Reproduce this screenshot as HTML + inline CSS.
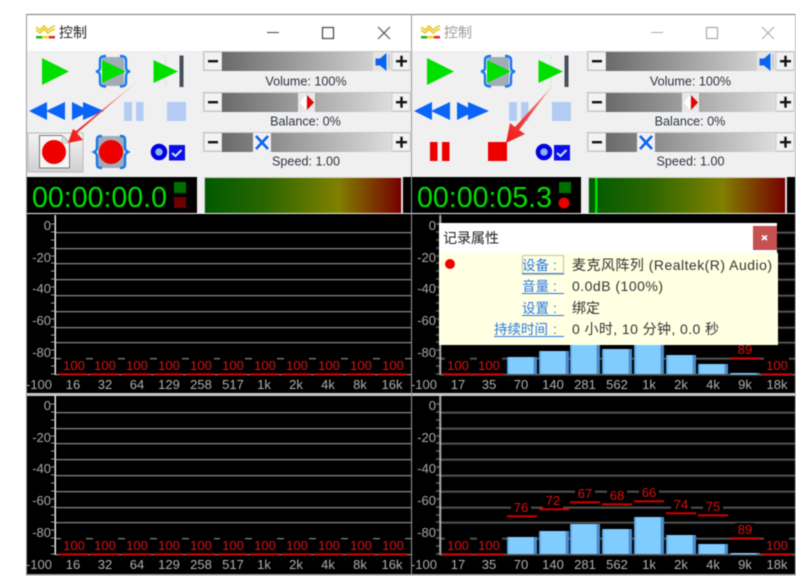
<!DOCTYPE html>
<html><head><meta charset="utf-8">
<style>
html,body{margin:0;padding:0;background:#fff;width:796px;height:576px;overflow:hidden}
svg{display:block;filter:blur(.45px)}
text{font-family:"Liberation Sans","Noto Sans CJK SC",sans-serif}
.lb{font-size:12.600px;fill:#2c3440;text-anchor:middle}
.ax{font-size:13px;fill:#a8a8a8;text-anchor:end}
.fr{font-size:13px;fill:#b0b0b0;text-anchor:middle}
.rd{font-size:13px;fill:#d81010;text-anchor:middle}
.tm{font-size:29px;fill:#00e000}
.lk{font-size:13.500px;fill:#2a78e4}
.vl{font-size:14px;fill:#333}
</style></head><body>
<svg width="796" height="576" viewBox="0 0 796 576" xmlns="http://www.w3.org/2000/svg">
<defs>
<linearGradient id="trk"><stop offset="0" stop-color="#6a6a6a"/><stop offset="1" stop-color="#dedede"/></linearGradient>
<linearGradient id="mtr"><stop offset="0" stop-color="#005a00"/><stop offset=".3" stop-color="#2a6600"/><stop offset=".68" stop-color="#808000"/><stop offset="1" stop-color="#780000"/></linearGradient>
<linearGradient id="btn" x1="0" y1="0" x2="0" y2="1"><stop offset="0" stop-color="#f4f4f4"/><stop offset="1" stop-color="#d0d0d0"/></linearGradient>
<linearGradient id="bar"><stop offset="0" stop-color="#4a8ac8"/><stop offset=".08" stop-color="#80ccff"/><stop offset=".88" stop-color="#80ccff"/><stop offset=".9" stop-color="#4a8ac8"/><stop offset="1" stop-color="#4a8ac8"/></linearGradient>
<linearGradient id="arL" x1="139" y1="80" x2="68" y2="143" gradientUnits="userSpaceOnUse"><stop offset="0" stop-color="#f8c0c0"/><stop offset=".5" stop-color="#f04848"/><stop offset="1" stop-color="#f01818"/></linearGradient>
<linearGradient id="arR" x1="553" y1="85" x2="506" y2="143" gradientUnits="userSpaceOnUse"><stop offset="0" stop-color="#f8c0c0"/><stop offset=".5" stop-color="#f04848"/><stop offset="1" stop-color="#f01818"/></linearGradient>

<g id="grid" fill="#808080">
<rect x="0" y="-142" width="356" height="1.300"/><rect x="0" y="-126" width="356" height="1.300"/><rect x="0" y="-111" width="356" height="1.300"/><rect x="0" y="-95" width="356" height="1.300"/><rect x="0" y="-79" width="356" height="1.300"/><rect x="0" y="-63" width="356" height="1.300"/><rect x="0" y="-47" width="356" height="1.300"/><rect x="0" y="-32" width="356" height="1.300"/><rect x="0" y="-16" width="356" height="1.300"/><rect x="0" y="0" width="356" height="1.300"/>
<rect x="-1.500" y="-159" width="1.500" height="160" fill="#e8e8e8"/>
<path d="M-5 -150h4M-5 -142h4M-5 -134h4M-5 -126h4M-5 -118h4M-5 -111h4M-5 -103h4M-5 -95h4M-5 -87h4M-5 -79h4M-5 -71h4M-5 -63h4M-5 -55h4M-5 -47h4M-5 -39h4M-5 -32h4M-5 -24h4M-5 -16h4M-5 -8h4M-5 0h4" stroke="#999" stroke-width="1" fill="none"/>
</g>

<g id="sld">
<rect x="0" y="0" width="207" height="20" fill="#c8c8c8"/>
<rect x="1" y="1" width="18" height="18" fill="#f2f2f2" stroke="#bbb" stroke-width=".6"/>
<rect x="5" y="9" width="10" height="2.400" fill="#111"/>
<rect x="19" y="1" width="170" height="19" fill="url(#trk)"/>
<rect x="189" y="1" width="18" height="18" fill="#f2f2f2" stroke="#bbb" stroke-width=".6"/>
<rect x="193" y="9" width="11" height="2.400" fill="#111"/><rect x="197.300" y="4.700" width="2.400" height="11" fill="#111"/>
</g>

<g id="ctl">
<path d="M42 58L69 71.500L42 85Z" fill="#00e000"/>
<rect x="102" y="57" width="22" height="29" fill="#a2acb8"/>
<path d="M106 56c-4 0-6 1-6 4v7c0 3-1 4-4 4.500c3 .5 4 2 4 5v6c0 3 2 4 6 4M120 56c4 0 6 1 6 4v7c0 3 1 4 4 4.500c-3 .5-4 2-4 5v6c0 3-2 4-6 4" fill="none" stroke="#1478f0" stroke-width="2.400"/>
<path d="M102 60L126 71.500L102 83Z" fill="#00e000"/>
<rect x="165" y="55" width="1.200" height="32" fill="#d4f0d4"/>
<path d="M153.500 60L178 71.500L153.500 83Z" fill="#00e000"/>
<rect x="179.500" y="55.500" width="4" height="31.500" fill="#46505a"/>
<path d="M29 111L47 102V120ZM46 111L65 102V120Z" fill="#0a64f8"/>
<path d="M72 102L90 111L72 120ZM83 102L104 111L83 120Z" fill="#0a64f8"/>
<rect x="124" y="102" width="8" height="19" fill="#b4ccf4"/><rect x="136" y="102" width="7.500" height="19" fill="#b4ccf4"/>
<rect x="167" y="102" width="19" height="19" fill="#b4ccf4"/>
<circle cx="159" cy="152" r="6" fill="#8cb0f0" stroke="#0000e0" stroke-width="4.500"/>
<rect x="169" y="145" width="16" height="15.500" fill="#0a10e8"/>
<path d="M172 153l3.500 3l6-6" fill="none" stroke="#d0e0ff" stroke-width="2"/>
</g>

<g id="thV"><rect x="0" y="0" width="18" height="19" fill="#e4e4e4"/><path d="M2.500 6.500h4.500l6.500-5.500v18l-6.500-5.500H2.500Z" fill="#0a64f0"/><rect x="15.500" y="2" width="1" height="15" fill="#b8b8b8"/></g>
<g id="thB"><rect x="0" y="0" width="17" height="19" fill="#e8e8e8"/><path d="M8 2L2 9.500L8 17Z" fill="#fff"/><path d="M9 2L16 9.500L9 17Z" fill="#e80000"/></g>
<g id="thS"><rect x="0" y="0" width="18" height="19" fill="#f0f0f0"/><path d="M3 3L15 16M15 3L3 16" stroke="#0a64f0" stroke-width="2.600"/></g>

<g id="ttl"><path d="M0 3l4 3l4-4l4 4l4-3l3-1M0 6l4 3l4-4l4 4l4-3l3-1" fill="none" stroke="#e8c820" stroke-width="1.600"/><rect x="0" y="12" width="6" height="2.500" fill="#20b030"/><rect x="6" y="12" width="7" height="2.500" fill="#f0d820"/><rect x="13" y="12" width="6" height="2.500" fill="#e82020"/></g>

<g id="mk"><rect x="0" y="-18" width="25" height="17.500" fill="#000"/></g>
<g id="mk2"><rect x="0" y="-15" width="20" height="14.500" fill="#000"/></g>
<g id="l100"><rect x="0" y="-.7" width="29" height="2" fill="#d00000"/></g>
<g id="l100w"><rect x="0" y="-.7" width="30" height="2" fill="#d00000"/></g>
</defs>

<rect width="796" height="576" fill="#fff"/>

<!-- LEFT WINDOW -->
<rect x="26" y="51" width="385" height="163" fill="#f0f0f0"/>
<rect x="26" y="214" width="385" height="361" fill="#c8c8c8"/>
<use href="#ttl" x="36" y="24"/>
<text x="59" y="37.500" font-size="14" fill="#222">控制</text>
<rect x="267" y="32" width="12" height="1" fill="#444"/>
<rect x="322.500" y="27.500" width="11" height="11" fill="none" stroke="#444" stroke-width="1.200"/>
<path d="M378 27L390 39M390 27L378 39" stroke="#444" stroke-width="1"/>

<use href="#ctl"/>
<rect x="28" y="133" width="55" height="39" fill="url(#btn)" stroke="#bbb" stroke-width="1"/>
<path d="M39.500 135.500H62L69.500 143V168H39.500Z" fill="#f6f6f6" stroke="#777" stroke-width="1"/>
<path d="M62 135.500V143H69.500" fill="#ddd" stroke="#bbb" stroke-width=".8"/>
<circle cx="54" cy="152" r="12" fill="#ee0000"/>
<rect x="98" y="136" width="26" height="32" fill="#a2acb8"/>
<path d="M102 136c-4 0-5 1-5 4v7c0 3-1 4-3 5c2 1 3 2 3 5v7c0 3 1 4 5 4M120 136c4 0 5 1 5 4v7c0 3 1 4 3 5c-2 1-3 2-3 5v7c0 3-1 4-5 4" fill="none" stroke="#1478f0" stroke-width="2.400"/>
<circle cx="111" cy="152" r="12" fill="#ee0000"/>
<path d="M139 80L77 133L83 140L68 143L73 129L76 131Z" fill="url(#arL)"/>

<use href="#sld" x="203" y="51"/><use href="#sld" x="203" y="92"/><use href="#sld" x="203" y="132"/>
<use href="#thV" x="373" y="52"/><use href="#thB" x="298" y="93"/><use href="#thS" x="253" y="133"/>
<text class="lb" x="306" y="85.500">Volume: 100%</text>
<text class="lb" x="305.500" y="125.500">Balance: 0%</text>
<text class="lb" x="306" y="165.500">Speed: 1.00</text>

<rect x="27" y="177" width="170" height="36" fill="#000"/>
<text class="tm" x="32" y="207" textLength="135" lengthAdjust="spacingAndGlyphs">00:00:00.0</text>
<rect x="174" y="182" width="12" height="11" fill="#006f00"/>
<rect x="174" y="197" width="12" height="11" fill="#6f0000"/>
<rect x="204" y="177" width="198" height="36" fill="#d0d0d0"/>
<rect x="205" y="178" width="196" height="35" fill="url(#mtr)"/>
<rect x="403" y="177" width="8" height="36" fill="#000"/>

<!-- left panels -->
<rect x="27" y="214" width="384" height="179" fill="#000"/>
<rect x="27" y="396" width="384" height="178" fill="#000"/>
<use href="#grid" x="56" y="374"/>
<use href="#grid" x="56" y="554"/>
<use href="#mk" x="61" y="374"/><use href="#mk" x="93" y="374"/><use href="#mk" x="125" y="374"/><use href="#mk" x="157" y="374"/><use href="#mk" x="189" y="374"/><use href="#mk" x="220" y="374"/><use href="#mk" x="252" y="374"/><use href="#mk" x="284" y="374"/><use href="#mk" x="316" y="374"/><use href="#mk" x="348" y="374"/><use href="#mk" x="380" y="374"/>
<use href="#mk" x="61" y="554"/><use href="#mk" x="93" y="554"/><use href="#mk" x="125" y="554"/><use href="#mk" x="157" y="554"/><use href="#mk" x="189" y="554"/><use href="#mk" x="220" y="554"/><use href="#mk" x="252" y="554"/><use href="#mk" x="284" y="554"/><use href="#mk" x="316" y="554"/><use href="#mk" x="348" y="554"/><use href="#mk" x="380" y="554"/>
<g>
<text class="ax" x="51" y="230">0</text><text class="ax" x="51" y="262">-20</text><text class="ax" x="51" y="293">-40</text><text class="ax" x="51" y="325">-60</text><text class="ax" x="51" y="357">-80</text><text class="ax" x="52" y="389">-100</text>
<text class="ax" x="51" y="410">0</text><text class="ax" x="51" y="442">-20</text><text class="ax" x="51" y="473">-40</text><text class="ax" x="51" y="505">-60</text><text class="ax" x="51" y="537">-80</text><text class="ax" x="52" y="569">-100</text>
</g>
<g>
<text class="fr" x="73" y="389">16</text><text class="fr" x="105" y="389">32</text><text class="fr" x="137" y="389">64</text><text class="fr" x="169" y="389">129</text><text class="fr" x="201" y="389">258</text><text class="fr" x="233" y="389">517</text><text class="fr" x="264" y="389">1k</text><text class="fr" x="296" y="389">2k</text><text class="fr" x="328" y="389">4k</text><text class="fr" x="360" y="389">8k</text><text class="fr" x="392" y="389">16k</text>
<text class="fr" x="73" y="569">16</text><text class="fr" x="105" y="569">32</text><text class="fr" x="137" y="569">64</text><text class="fr" x="169" y="569">129</text><text class="fr" x="201" y="569">258</text><text class="fr" x="233" y="569">517</text><text class="fr" x="264" y="569">1k</text><text class="fr" x="296" y="569">2k</text><text class="fr" x="328" y="569">4k</text><text class="fr" x="360" y="569">8k</text><text class="fr" x="392" y="569">16k</text>
</g>
<g>
<use href="#l100" x="59" y="374"/><use href="#l100" x="90" y="374"/><use href="#l100" x="122" y="374"/><use href="#l100" x="154" y="374"/><use href="#l100" x="186" y="374"/><use href="#l100" x="218" y="374"/><use href="#l100" x="250" y="374"/><use href="#l100" x="282" y="374"/><use href="#l100" x="314" y="374"/><use href="#l100" x="346" y="374"/><use href="#l100" x="378" y="374"/>
<use href="#l100" x="59" y="554"/><use href="#l100" x="90" y="554"/><use href="#l100" x="122" y="554"/><use href="#l100" x="154" y="554"/><use href="#l100" x="186" y="554"/><use href="#l100" x="218" y="554"/><use href="#l100" x="250" y="554"/><use href="#l100" x="282" y="554"/><use href="#l100" x="314" y="554"/><use href="#l100" x="346" y="554"/><use href="#l100" x="378" y="554"/>
<text class="rd" x="74" y="370">100</text><text class="rd" x="105" y="370">100</text><text class="rd" x="137" y="370">100</text><text class="rd" x="169" y="370">100</text><text class="rd" x="201" y="370">100</text><text class="rd" x="233" y="370">100</text><text class="rd" x="265" y="370">100</text><text class="rd" x="297" y="370">100</text><text class="rd" x="329" y="370">100</text><text class="rd" x="361" y="370">100</text><text class="rd" x="393" y="370">100</text>
<text class="rd" x="74" y="550">100</text><text class="rd" x="105" y="550">100</text><text class="rd" x="137" y="550">100</text><text class="rd" x="169" y="550">100</text><text class="rd" x="201" y="550">100</text><text class="rd" x="233" y="550">100</text><text class="rd" x="265" y="550">100</text><text class="rd" x="297" y="550">100</text><text class="rd" x="329" y="550">100</text><text class="rd" x="361" y="550">100</text><text class="rd" x="393" y="550">100</text>
</g>

<!-- RIGHT WINDOW -->
<rect x="412" y="51" width="384" height="163" fill="#f0f0f0"/>
<rect x="412" y="214" width="384" height="361" fill="#c8c8c8"/>
<use href="#ttl" x="421" y="24"/>
<text x="444" y="37.500" font-size="14" fill="#999">控制</text>
<rect x="651" y="32" width="12" height="1" fill="#aaa"/>
<rect x="706.500" y="27.500" width="11" height="11" fill="none" stroke="#aaa" stroke-width="1.200"/>
<path d="M762 27L774 39M774 27L762 39" stroke="#aaa" stroke-width="1"/>

<use href="#ctl" x="385"/>
<rect x="430" y="142" width="7.500" height="19" fill="#ee0000"/><rect x="442" y="142" width="7.500" height="19" fill="#ee0000"/>
<rect x="488" y="142" width="19" height="19" fill="#ee0000"/>
<path d="M553 85L519 130L525 134L506 143L510 123L515 127Z" fill="url(#arR)"/>

<use href="#sld" x="587" y="51"/><use href="#sld" x="587" y="92"/><use href="#sld" x="587" y="132"/>
<use href="#thV" x="757" y="52"/><use href="#thB" x="682" y="93"/><use href="#thS" x="637" y="133"/>
<text class="lb" x="690.500" y="85.500">Volume: 100%</text>
<text class="lb" x="690" y="125.500">Balance: 0%</text>
<text class="lb" x="690.500" y="165.500">Speed: 1.00</text>

<rect x="412" y="177" width="169" height="36" fill="#000"/>
<text class="tm" x="417" y="207" textLength="135" lengthAdjust="spacingAndGlyphs">00:00:05.3</text>
<rect x="559" y="182" width="12" height="11" fill="#006f00"/>
<circle cx="564" cy="203" r="5.500" fill="#e80000"/>
<rect x="588" y="177" width="198" height="36" fill="#d0d0d0"/>
<rect x="589" y="178" width="196" height="35" fill="url(#mtr)"/>
<rect x="595" y="178" width="2.500" height="35" fill="#00e000"/>
<rect x="787" y="177" width="8" height="36" fill="#000"/>

<rect x="412" y="214" width="383" height="179" fill="#000"/>
<rect x="412" y="396" width="383" height="178" fill="#000"/>
<svg x="0" y="0" width="795" height="576" overflow="hidden"><use href="#grid" x="441" y="374"/><use href="#grid" x="441" y="554"/></svg>

<use href="#mk" x="445" y="374"/><use href="#mk" x="477" y="374"/><use href="#mk" x="764" y="374"/><use href="#mk2" x="735" y="358"/>
<use href="#mk" x="445" y="554"/><use href="#mk" x="477" y="554"/><use href="#mk" x="764" y="554"/><use href="#mk2" x="735" y="538"/>
<use href="#mk2" x="511" y="516"/><use href="#mk2" x="543" y="509"/><use href="#mk2" x="575" y="502"/><use href="#mk2" x="607" y="504"/><use href="#mk2" x="639" y="501"/><use href="#mk2" x="671" y="513"/><use href="#mk2" x="703" y="515"/>

<g>
<text class="ax" x="436" y="230">0</text><text class="ax" x="436" y="262">-20</text><text class="ax" x="436" y="293">-40</text><text class="ax" x="436" y="325">-60</text><text class="ax" x="436" y="357">-80</text><text class="ax" x="437" y="389">-100</text>
<text class="ax" x="436" y="410">0</text><text class="ax" x="436" y="442">-20</text><text class="ax" x="436" y="473">-40</text><text class="ax" x="436" y="505">-60</text><text class="ax" x="436" y="537">-80</text><text class="ax" x="437" y="569">-100</text>
</g>
<g>
<text class="fr" x="458" y="389">17</text><text class="fr" x="489" y="389">35</text><text class="fr" x="521" y="389">70</text><text class="fr" x="553" y="389">140</text><text class="fr" x="585" y="389">281</text><text class="fr" x="617" y="389">562</text><text class="fr" x="649" y="389">1k</text><text class="fr" x="681" y="389">2k</text><text class="fr" x="713" y="389">4k</text><text class="fr" x="745" y="389">9k</text><text class="fr" x="777" y="389">18k</text>
<text class="fr" x="458" y="569">17</text><text class="fr" x="489" y="569">35</text><text class="fr" x="521" y="569">70</text><text class="fr" x="553" y="569">140</text><text class="fr" x="585" y="569">281</text><text class="fr" x="617" y="569">562</text><text class="fr" x="649" y="569">1k</text><text class="fr" x="681" y="569">2k</text><text class="fr" x="713" y="569">4k</text><text class="fr" x="745" y="569">9k</text><text class="fr" x="777" y="569">18k</text>
</g>

<!-- bars -->
<g fill="url(#bar)">
<rect x="507" y="357" width="30" height="17"/><rect x="539" y="351" width="30" height="23"/><rect x="570" y="344" width="30" height="30"/><rect x="602" y="349" width="30" height="25"/><rect x="634" y="337" width="30" height="37"/><rect x="666" y="355" width="30" height="19"/><rect x="698" y="364" width="30" height="10"/><rect x="730" y="373" width="30" height="1.500"/>
<rect x="507" y="537" width="30" height="17"/><rect x="539" y="531" width="30" height="23"/><rect x="570" y="524" width="30" height="30"/><rect x="602" y="529" width="30" height="25"/><rect x="634" y="517" width="30" height="37"/><rect x="666" y="535" width="30" height="19"/><rect x="698" y="544" width="30" height="10"/><rect x="730" y="553" width="30" height="1.500"/>
</g>
<g fill="#d00000">
<rect x="443" y="373.300" width="29" height="2"/><rect x="474" y="373.300" width="30" height="2"/><rect x="762" y="373.300" width="30" height="2"/><rect x="730" y="357.300" width="30" height="2"/>
<rect x="443" y="553.300" width="29" height="2"/><rect x="474" y="553.300" width="30" height="2"/><rect x="762" y="553.300" width="30" height="2"/><rect x="730" y="537.300" width="30" height="2"/>
<rect x="507" y="515.300" width="30" height="2"/><rect x="539" y="508.300" width="30" height="2"/><rect x="570" y="501.300" width="30" height="2"/><rect x="602" y="503.300" width="30" height="2"/><rect x="634" y="500.300" width="30" height="2"/><rect x="666" y="512.300" width="30" height="2"/><rect x="698" y="514.300" width="30" height="2"/>
</g>
<g>
<text class="rd" x="458" y="370">100</text><text class="rd" x="489" y="370">100</text><text class="rd" x="777" y="370">100</text><text class="rd" x="745" y="354">89</text>
<text class="rd" x="458" y="550">100</text><text class="rd" x="489" y="550">100</text><text class="rd" x="777" y="550">100</text><text class="rd" x="745" y="534">89</text>
<text class="rd" x="521" y="512">76</text><text class="rd" x="553" y="505">72</text><text class="rd" x="585" y="498">67</text><text class="rd" x="617" y="500">68</text><text class="rd" x="649" y="497">66</text><text class="rd" x="681" y="509">74</text><text class="rd" x="713" y="511">75</text>
</g>

<!-- tooltip -->
<rect x="439" y="253" width="339" height="92" fill="#ffffe2"/>
<rect x="439" y="223" width="338" height="30" fill="#fff"/>
<text x="443" y="243" font-size="14" fill="#222">记录属性</text>
<rect x="753" y="226" width="24" height="24" fill="#c75050"/>
<path d="M762 235.500l5 4.500M767 235.500l-5 4.500" stroke="#fff" stroke-width="1.800"/>
<circle cx="450" cy="264" r="5" fill="#ee0000"/>
<rect x="522.500" y="255.500" width="41" height="19" fill="none" stroke="#666" stroke-width=".8" stroke-dasharray="1 1"/>
<text class="lk" x="522" y="270">设备</text><text class="lk" x="553" y="270">:</text>
<text class="lk" x="522" y="291">音量</text><text class="lk" x="553" y="291">:</text>
<text class="lk" x="522" y="313">设置</text><text class="lk" x="553" y="313">:</text>
<text class="lk" x="494" y="334">持续时间</text><text class="lk" x="553" y="334">:</text>
<g fill="#2a78e4"><rect x="522" y="273" width="42" height="1"/><rect x="522" y="293" width="42" height="1"/><rect x="522" y="315" width="42" height="1"/><rect x="494" y="336" width="70" height="1"/></g>
<text class="vl" x="572" y="270" textLength="200" lengthAdjust="spacing">麦克风阵列 (Realtek(R) Audio)</text>
<text class="vl" x="572" y="291" textLength="91" lengthAdjust="spacing">0.0dB (100%)</text>
<text class="vl" x="572" y="313">绑定</text>
<text class="vl" x="572" y="334" textLength="147" lengthAdjust="spacing">0 小时, 10 分钟, 0.0 秒</text>

<!-- borders -->
<rect x="26" y="14" width="770" height="1" fill="#777"/>
<rect x="26" y="14" width="1" height="561" fill="#999"/>
<rect x="411" y="14" width="1" height="561" fill="#999"/>
<rect x="795" y="14" width="1" height="561" fill="#bbb"/>
<rect x="26" y="574" width="770" height="1.500" fill="#999"/>
</svg>
</body></html>
